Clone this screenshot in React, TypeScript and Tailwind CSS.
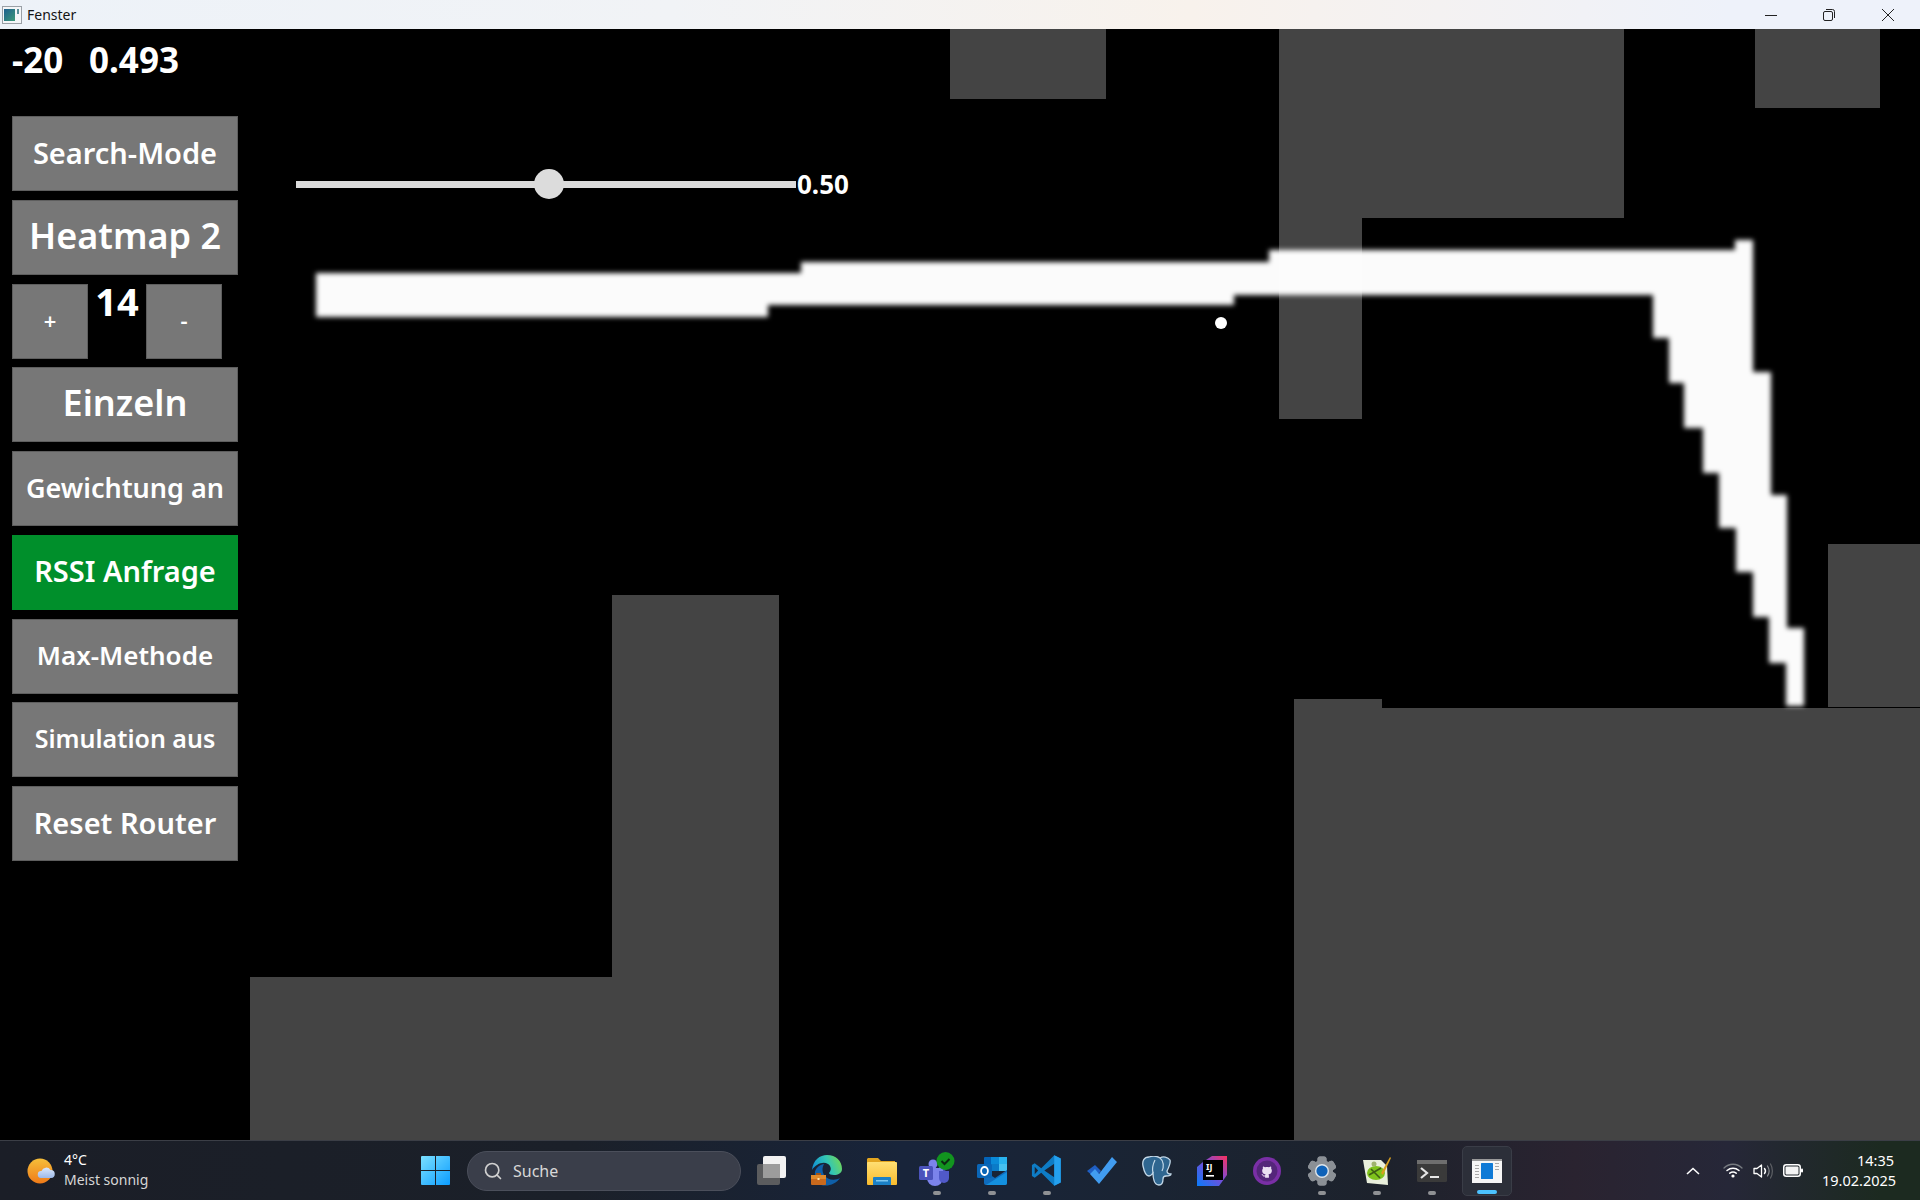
import React from 'react';
import { Search } from 'lucide-react';

const panelButton = 'flex items-center justify-center h-[75px] pb-[3px] border border-[#5e5e5e] bg-[#777777] text-white font-semibold leading-none whitespace-nowrap';

const PanelButton: React.FC<{ className: string; children: React.ReactNode }> = ({ className, children }) => (
  <div className={`${panelButton} ${className}`}>{children}</div>
);

// floor plan: page coordinates, the canvas starts at x=250 y=29
const walls = [
  'M950 29H1106V99H950Z',
  'M1279 29H1624V218H1362V419H1279Z',
  'M1755 29H1880V108H1755Z',
  'M1828 544H1920V707H1828Z',
  'M1294 699H1382V708H1920V1140H1294Z',
  'M612 595H779V1140H250V977H612Z',
];

const heat =
  'M316 273H801V262H1269V250H1735V240H1753V372H1771V495H1787V628H1804V706H1786V663H1769V617H1753V572H1736V528H1719V473H1703V428H1684V383H1669V338H1653V295H1234V305H768V317H316Z';

const FloorPlan = () => (
  <svg className="absolute inset-0" width="1670" height="1111" viewBox="250 29 1670 1111">
    <defs>
      <filter id="soft" x="-5%" y="-5%" width="110%" height="110%">
        <feGaussianBlur stdDeviation="2.8" />
      </filter>
    </defs>
    {walls.map((d) => (
      <path key={d} d={d} fill="#444444" />
    ))}
    <path d={heat} fill="#ffffff" fillOpacity="0.985" filter="url(#soft)" />
    <circle cx="1221" cy="323" r="6" fill="#ffffff" />
  </svg>
);

const WindowIcon = () => (
  <svg width="20" height="18" viewBox="0 0 20 18">
    <rect x="0.5" y="0.5" width="19" height="17" fill="#f4f6f8" stroke="#9aa0a6" />
    <defs>
      <linearGradient id="wi" x1="0" y1="0" x2="1" y2="1">
        <stop offset="0" stopColor="#1d5f8f" />
        <stop offset="1" stopColor="#3d9a78" />
      </linearGradient>
    </defs>
    <rect x="2" y="3" width="11" height="12" fill="url(#wi)" />
    <rect x="15" y="3" width="2" height="5" fill="#5a8f9a" />
  </svg>
);

const WeatherIcon = () => (
  <svg width="28" height="26" viewBox="0 0 28 26">
    <defs>
      <linearGradient id="sun" x1="0" y1="0" x2="0" y2="1">
        <stop offset="0" stopColor="#f6bf3a" />
        <stop offset="1" stopColor="#ef7a18" />
      </linearGradient>
      <linearGradient id="cl" x1="0" y1="0" x2="0" y2="1">
        <stop offset="0" stopColor="#dbe8fb" />
        <stop offset="1" stopColor="#9db9e8" />
      </linearGradient>
    </defs>
    <circle cx="13" cy="13" r="12.5" fill="url(#sun)" />
    <path d="M14 20a3.5 3.5 0 0 1 .5-7 5 5 0 0 1 9-1 4 4 0 0 1 .5 8Z" fill="url(#cl)" />
  </svg>
);

const StartIcon = () => (
  <svg width="29" height="29" viewBox="0 0 29 29">
    <defs>
      <linearGradient id="st" x1="0" y1="0" x2="1" y2="1">
        <stop offset="0" stopColor="#7be0ff" />
        <stop offset="1" stopColor="#0b9cff" />
      </linearGradient>
    </defs>
    <path d="M1 0H14V14H0V1a1 1 0 0 1 1-1ZM15 0H28a1 1 0 0 1 1 1V14H15ZM0 15H14V29H1a1 1 0 0 1-1-1ZM15 15H29V28a1 1 0 0 1-1 1H15Z" fill="url(#st)" />
  </svg>
);

const TaskViewIcon = () => (
  <svg width="30" height="29" viewBox="0 0 30 29">
    <rect x="0" y="8" width="23" height="21" rx="2" fill="#5b5c5e" />
    <rect x="6" y="0" width="23" height="22" rx="2" fill="#f2f2f2" />
    <rect x="6" y="8" width="17" height="14" fill="#9c9c9c" />
  </svg>
);

const EdgeIcon = () => (
  <svg width="31" height="31" viewBox="0 0 31 31">
    <defs>
      <linearGradient id="e1" x1="0" y1="0.6" x2="1" y2="0.3">
        <stop offset="0" stopColor="#0f8fd6" />
        <stop offset="0.55" stopColor="#33c6b5" />
        <stop offset="1" stopColor="#72d857" />
      </linearGradient>
    </defs>
    <path d="M1 15C2 5 9 0 16 0C25 0 31 6 31 14C31 18 27 20 23 20C20 20 18 19 18 18C21 15 20 11 17 9C12 6 5 9 1 15Z" fill="url(#e1)" />
    <path d="M10 30C17 32 25 29 29 23C24 26 16 25 13 20C11 16 11 13 13 9C7 10 3 15 4 20C5 25 7 28 10 30Z" fill="#0f5fa8" />
    <rect x="0" y="20" width="15" height="10" rx="1" fill="#c9691d" />
    <rect x="0" y="20" width="15" height="4" fill="#e08a2c" />
    <rect x="5" y="18" width="5" height="2" fill="#a65413" />
    <rect x="6.5" y="23" width="2" height="2" fill="#ffe2a8" />
  </svg>
);

const FolderIcon = () => (
  <svg width="30" height="28" viewBox="0 0 30 28">
    <defs>
      <linearGradient id="fo" x1="0" y1="0" x2="0" y2="1">
        <stop offset="0" stopColor="#ffdf73" />
        <stop offset="1" stopColor="#f9bb2d" />
      </linearGradient>
    </defs>
    <path d="M1 1H11L14 4H28V8H0V2Z" fill="#e3a51f" />
    <rect x="0" y="5" width="30" height="23" rx="1" fill="url(#fo)" />
    <path d="M6 28V21a1 1 0 0 1 1-1H23a1 1 0 0 1 1 1V28Z" fill="#1b80c6" />
    <rect x="9" y="23" width="12" height="1.5" fill="#7cc6ef" />
  </svg>
);

const TeamsIcon = () => (
  <svg width="36" height="37" viewBox="0 0 36 37">
    <circle cx="14" cy="12" r="4.5" fill="#7b83eb" />
    <circle cx="24" cy="15" r="4" fill="#5059c9" />
    <path d="M8 16H24V26A8 8 0 0 1 8 26Z" fill="#7b83eb" />
    <path d="M20 19H30V26A5 5 0 0 1 20 26Z" fill="#5059c9" />
    <rect x="0" y="14" width="14" height="14" rx="1.5" fill="#4b53bc" />
    <text x="7" y="25" textAnchor="middle" fontSize="11" fontWeight="700" fill="#ffffff" fontFamily="'Noto Sans', sans-serif">T</text>
    <circle cx="26.5" cy="9" r="9" fill="#12941f" />
    <path d="M22.5 9L25.5 12L30.5 7" fill="none" stroke="#0c2a12" strokeWidth="2" />
  </svg>
);

const OutlookIcon = () => (
  <svg width="30" height="28" viewBox="0 0 30 28">
    <rect x="7" y="0" width="22" height="14" rx="1" fill="#0364b8" />
    <rect x="14" y="0" width="8" height="7" fill="#0a8ad8" />
    <rect x="22" y="0" width="8" height="7" fill="#29b3ee" />
    <rect x="14" y="7" width="8" height="7" fill="#0a7bc8" />
    <rect x="22" y="7" width="8" height="7" fill="#46c1f0" />
    <path d="M7 14L18 21L30 13V26a2 2 0 0 1-2 2H9a2 2 0 0 1-2-2Z" fill="#0f6cbd" />
    <path d="M9 28L30 15V26a2 2 0 0 1-2 2Z" fill="#1490df" />
    <rect x="0" y="7" width="15" height="14" rx="1.5" fill="#0a66b7" />
    <ellipse cx="7.5" cy="14" rx="3.4" ry="4" fill="none" stroke="#ffffff" strokeWidth="1.8" />
  </svg>
);

const VsCodeIcon = () => (
  <svg width="31" height="31" viewBox="0 0 100 100">
    <path fillRule="evenodd" d="M96 11L75 1L33 43L12 27L3 32V68L12 73L33 57L75 99L96 89ZM75 28L43 50L75 72ZM12 38L23 50L12 62Z" fill="#0e7cc5" />
    <path d="M75 1L96 11V89L75 99Z" fill="#24a0ee" />
  </svg>
);

const TodoIcon = () => (
  <svg width="30" height="28" viewBox="0 0 30 28">
    <path d="M0 14L8 8L14 14L8 21Z" fill="#1f5fc4" />
    <path d="M25 0L30 5L12 27L3 17L8 12L12 17Z" fill="#419cf0" />
  </svg>
);

const PostgresIcon = () => (
  <svg width="30" height="30" viewBox="0 0 30 30">
    <path d="M7 1C2 1 0 5 1 10C2 15 4 20 7 20C9 20 10 18 11 17C11 22 12 29 17 29C20 29 21 26 21 23C21 21 22 20 24 20C27 20 29 19 29 18C27 18 25 17 25 15C27 11 29 7 28 4C26 1 21 0 18 2C15 0 10 0 7 1Z" fill="#2f6690" stroke="#c3d8e8" strokeWidth="1.3" />
    <path d="M11 17C10 13 11 8 13 4M18 2C22 5 22 11 20 15" fill="none" stroke="#c3d8e8" strokeWidth="1.2" />
  </svg>
);

const IntellijIcon = () => (
  <svg width="30" height="30" viewBox="0 0 30 30">
    <defs>
      <linearGradient id="ij" x1="0" y1="1" x2="1" y2="0">
        <stop offset="0" stopColor="#087cfa" />
        <stop offset="0.55" stopColor="#7a4bd6" />
        <stop offset="1" stopColor="#fe315d" />
      </linearGradient>
    </defs>
    <path d="M6 6L15 0H30V19L22 30H0V11Z" fill="url(#ij)" />
    <rect x="6" y="4" width="20" height="20" fill="#000000" />
    <text x="9" y="14" fontSize="9" fontWeight="700" fill="#ffffff" fontFamily="'Noto Sans', sans-serif">IJ</text>
    <rect x="9" y="19" width="8" height="1.6" fill="#ffffff" />
  </svg>
);

const GithubIcon = () => (
  <svg width="28" height="28" viewBox="0 0 28 28">
    <circle cx="14" cy="14" r="14" fill="#7a2fa6" />
    <circle cx="14" cy="14" r="10.5" fill="#54267a" />
    <g transform="translate(6.4 6.4) scale(0.95)">
      <path
        d="M6.02 15.21c0-.19-.01-.82-.01-1.49-2.01.37-2.53-.49-2.69-.94-.09-.23-.48-.94-.82-1.13-.28-.15-.68-.52-.01-.53.63-.01 1.08.58 1.23.82.72 1.21 1.87.87 2.33.66.07-.52.28-.87.51-1.07-1.78-.2-3.64-.89-3.64-3.95 0-.87.31-1.59.82-2.15-.08-.2-.36-1.02.08-2.12 0 0 .67-.21 2.2.82.64-.18 1.32-.27 2-.27.68 0 1.36.09 2 .27 1.53-1.04 2.2-.82 2.2-.82.44 1.1.16 1.92.08 2.12.51.56.82 1.27.82 2.15 0 3.07-1.87 3.75-3.65 3.95.29.25.54.73.54 1.48 0 1.07-.01 1.93-.01 2.2z"
        fill="#eadff2"
      />
    </g>
  </svg>
);

const SettingsIcon = () => (
  <svg width="30" height="30" viewBox="0 0 30 30">
    {[0, 60, 120, 180, 240, 300].map((a) => (
      <rect key={a} x="10.5" y="0.5" width="9" height="29" rx="2.5" fill="#8b9096" transform={`rotate(${a} 15 15)`} />
    ))}
    <circle cx="15" cy="15" r="11" fill="#8b9096" />
    <circle cx="15" cy="15" r="7" fill="#dfe6ec" />
    <circle cx="15" cy="15" r="5.6" fill="#0f62b8" />
  </svg>
);

const NotepadIcon = () => (
  <svg width="28" height="28" viewBox="0 0 28 28">
    <path d="M0 3H18L24 9L25 28L4 26Z" fill="#e9efdc" />
    <ellipse cx="13" cy="16" rx="9" ry="7" fill="#7fc31c" />
    <path d="M6 18L18 11M8 12L17 21" stroke="#3d5c14" strokeWidth="1.6" />
    <circle cx="11" cy="7" r="2.5" fill="#9fb36e" />
    <path d="M18 16L27 0L28 1L20 18Z" fill="#d8a020" />
  </svg>
);

const TerminalIcon = () => (
  <svg width="30" height="22" viewBox="0 0 30 22">
    <rect width="30" height="22" rx="1.5" fill="#3a3a3a" />
    <rect width="30" height="4" fill="#6e6e6e" />
    <path d="M4 8L10 13L4 18" fill="none" stroke="#e6e6e6" strokeWidth="2.2" />
    <rect x="13" y="16" width="9" height="2" fill="#e6e6e6" />
  </svg>
);

const ActiveAppIcon = () => (
  <svg width="30" height="24" viewBox="0 0 30 24">
    <rect width="30" height="24" fill="#f6f6f6" />
    <rect width="30" height="2" fill="#9a9a9a" />
    <rect x="9" y="4" width="12" height="16" rx="0.5" fill="#0f7ad6" />
    {[6, 9, 12, 15, 18].map((y) => (
      <rect key={y} x="3" y={y} width="4" height="1" fill="#a8a8a8" />
    ))}
    {[4, 7, 10].map((y) => (
      <rect key={y} x="23" y={y} width="4" height="1" fill="#a8a8a8" />
    ))}
  </svg>
);

const TaskIcon: React.FC<{ running?: boolean; children: React.ReactNode }> = ({ running, children }) => (
  <div className="relative flex items-center justify-center w-[55px] h-[60px]">
    {children}
    {running && <div className="absolute bottom-[6px] left-[23.5px] w-[8px] h-[4px] rounded-full bg-[#8f9194]" />}
  </div>
);

const WifiIcon = () => (
  <svg width="20" height="15" viewBox="0 0 20 15" fill="none" strokeLinecap="round">
    <path d="M1 5C6 0 14 0 19 5" stroke="#777b80" strokeWidth="1.3" />
    <path d="M4 7.5C7.5 4.5 12.5 4.5 16 7.5" stroke="#ffffff" strokeWidth="1.5" />
    <path d="M6.8 10.2C8.7 8.8 11.3 8.8 13.2 10.2" stroke="#ffffff" strokeWidth="1.5" />
    <circle cx="10" cy="13" r="1.6" fill="#ffffff" />
  </svg>
);

const SpeakerIcon = () => (
  <svg width="20" height="16" viewBox="0 0 20 16" fill="none" strokeLinecap="round">
    <path d="M1 5.5V10.5H4L8.5 14V2L4 5.5Z" stroke="#ffffff" strokeWidth="1.3" strokeLinejoin="round" />
    <path d="M11.5 5.5C12.7 7 12.7 9 11.5 10.5" stroke="#ffffff" strokeWidth="1.4" />
    <path d="M14.5 3C16.5 6 16.5 10 14.5 13" stroke="#8b8e92" strokeWidth="1.2" />
    <path d="M17.5 1C20 5 20 11 17.5 15" stroke="#5f6266" strokeWidth="1.2" />
  </svg>
);

const BatteryIcon = () => (
  <svg width="20" height="13" viewBox="0 0 20 13">
    <rect x="0.75" y="0.75" width="16.5" height="11.5" rx="2.5" fill="none" stroke="#ffffff" strokeWidth="1.5" />
    <rect x="2.5" y="2.5" width="13" height="8" rx="1" fill="#f4f4f4" />
    <rect x="18" y="4.5" width="2" height="4" rx="1" fill="#ffffff" />
  </svg>
);

export default function App() {
  return (
    <div className="flex flex-col w-[1920px] h-[1200px] overflow-hidden bg-black font-['Noto_Sans',sans-serif]">
      {/* title bar */}
      <div className="flex items-center h-[29px] pl-[2px] bg-[linear-gradient(90deg,#edf2f8_0%,#f1f3f6_35%,#f8f2ec_62%,#f4f2f2_75%,#eef2fa_90%)]">
        <WindowIcon />
        <span className="ml-[5px] text-[14px] text-[#141414]">Fenster</span>
        <div className="flex items-center ml-auto pr-[26px] gap-[46px]">
          <svg width="12" height="12" viewBox="0 0 12 12">
            <path d="M0 6.5H12" stroke="#222222" />
          </svg>
          <svg width="12" height="12" viewBox="0 0 12 12" fill="none" stroke="#222222">
            <rect x="0.5" y="2.5" width="9" height="9" rx="1.5" />
            <path d="M3 0.5H9.5A2 2 0 0 1 11.5 2.5V9" />
          </svg>
          <svg className="ml-[1px]" width="12" height="12" viewBox="0 0 12 12" stroke="#222222">
            <path d="M0 0L12 12M12 0L0 12" />
          </svg>
        </div>
      </div>

      {/* application */}
      <div className="flex flex-1 min-h-0">
        <div className="flex flex-col w-[250px] pl-[12px] gap-[8.75px] text-white">
          <div className="flex items-center h-[61px] mb-[17.25px] text-[35px] font-bold leading-none">
            <span className="w-[77px]">-20</span>
            <span>0.493</span>
          </div>
          <PanelButton className="w-[226px] text-[29px]">Search-Mode</PanelButton>
          <PanelButton className="w-[226px] text-[36px]">Heatmap 2</PanelButton>
          <div className="flex">
            <PanelButton className="w-[76px] text-[22px]">+</PanelButton>
            <div className="w-[58px] text-center text-[38px] font-bold leading-[35px]">14</div>
            <PanelButton className="w-[76px] text-[22px]">-</PanelButton>
          </div>
          <PanelButton className="w-[226px] text-[36px]">Einzeln</PanelButton>
          <PanelButton className="w-[226px] text-[27px]">Gewichtung an</PanelButton>
          <PanelButton className="w-[226px] text-[29px] !bg-[#008f2b] !border-[#008f2b]">RSSI Anfrage</PanelButton>
          <PanelButton className="w-[226px] text-[26px]">Max-Methode</PanelButton>
          <PanelButton className="w-[226px] text-[25px]">Simulation aus</PanelButton>
          <PanelButton className="w-[226px] text-[29px]">Reset Router</PanelButton>
        </div>

        <div className="relative flex-1">
          <FloorPlan />
          {/* threshold slider */}
          <div className="absolute left-[46px] top-[142px] flex items-center">
            <div className="relative w-[500px] h-[7px] bg-[#dcdcdc]">
              <div className="absolute left-[238px] top-[-12px] w-[30px] h-[30px] rounded-full bg-[#dcdcdc]" />
            </div>
            <span className="ml-[1px] text-[26px] font-bold leading-none text-white">0.50</span>
          </div>
        </div>
      </div>

      {/* taskbar */}
      <div className="flex items-center h-[60px] border-t border-[#3b3e46] text-white bg-[linear-gradient(90deg,#1b1e27_0%,#1b2029_30%,#18243a_47%,#1a2433_60%,#1d222c_72%,#2a2330_82%,#262738_90%,#1c2a20_98%)]">
        <div className="flex items-center w-[408px] pl-[27px] gap-[9px]">
          <WeatherIcon />
          <div className="flex flex-col mb-[2px] text-[14px] leading-[20px]">
            <span>4°C</span>
            <span className="text-[#d6d6d6]">Meist sonnig</span>
          </div>
        </div>
        <TaskIcon><StartIcon /></TaskIcon>
        <div className="flex items-center w-[274px] h-[40px] ml-[4px] mr-[3px] pl-[15px] gap-[10px] rounded-full border border-[#4b4f5b] bg-[#3a3e4a] text-[16px] text-[#d8d8d8]">
          <Search size={20} strokeWidth={2} className="text-[#d0d0d0]" />
          <span>Suche</span>
        </div>
        <div className="flex items-center">
          <TaskIcon><TaskViewIcon /></TaskIcon>
          <TaskIcon><EdgeIcon /></TaskIcon>
          <TaskIcon><FolderIcon /></TaskIcon>
          <TaskIcon running><TeamsIcon /></TaskIcon>
          <TaskIcon running><OutlookIcon /></TaskIcon>
          <TaskIcon running><VsCodeIcon /></TaskIcon>
          <TaskIcon><TodoIcon /></TaskIcon>
          <TaskIcon><PostgresIcon /></TaskIcon>
          <TaskIcon><IntellijIcon /></TaskIcon>
          <TaskIcon><GithubIcon /></TaskIcon>
          <TaskIcon running><SettingsIcon /></TaskIcon>
          <TaskIcon running><NotepadIcon /></TaskIcon>
          <TaskIcon running><TerminalIcon /></TaskIcon>
          <div className="relative flex items-center justify-center w-[50px] h-[50px] ml-[3px] rounded-[5px] border border-[#3a3d47] bg-[#2c2f39]">
            <ActiveAppIcon />
            <div className="absolute bottom-[1px] left-[14px] w-[20px] h-[4px] rounded-full bg-[#4cc2ff]" />
          </div>
        </div>
        <div className="flex items-center ml-auto pr-[26px]">
          <svg width="14" height="8" viewBox="0 0 14 8" fill="none" stroke="#ffffff" strokeWidth="1.6">
            <path d="M1 7L7 1.5L13 7" />
          </svg>
          <div className="flex items-center ml-[23px] gap-[10px]">
            <WifiIcon />
            <SpeakerIcon />
            <BatteryIcon />
          </div>
          <div className="ml-[19px] mb-[2px] w-[72px] text-right text-[14.5px] leading-[20px] whitespace-nowrap">
            <div>14:35</div>
            <div>19.02.2025</div>
          </div>
        </div>
      </div>
    </div>
  );
}
